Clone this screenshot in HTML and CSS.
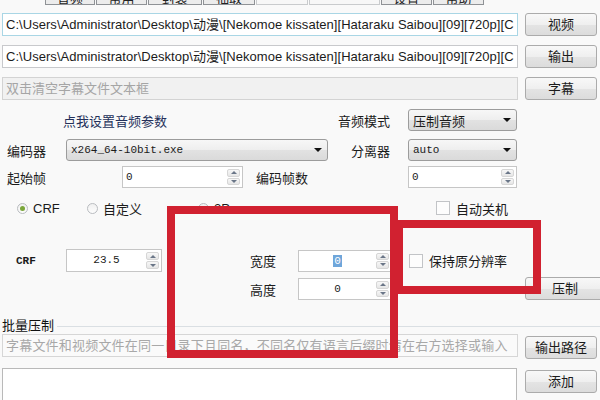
FILE: index.html
```html
<!DOCTYPE html>
<html>
<head>
<meta charset="utf-8">
<link rel="stylesheet" href="styles.css">
</head>
<body>
<div class="win">
  <div class="tabs">
    <div class="tab w50">音频</div>
    <div class="tab w51">常用</div>
    <div class="tab w54">封装</div>
    <div class="tab w52">抽取</div>
    <div class="tab w52 light"></div>
    <div class="tab w71 light"></div>
    <div class="tab w51">设置</div>
    <div class="tab w51">帮助</div>
  </div>

  <div class="row r1">
    <div class="txt focus path">C:\Users\Administrator\Desktop\动漫\[Nekomoe kissaten][Hataraku Saibou][09][720p][C</div>
    <div class="btn">视频</div>
  </div>
  <div class="row r2">
    <div class="txt path">C:\Users\Administrator\Desktop\动漫\[Nekomoe kissaten][Hataraku Saibou][09][720p][C</div>
    <div class="btn">输出</div>
  </div>
  <div class="row r3">
    <div class="txt disabled">双击清空字幕文件文本框</div>
    <div class="btn">字幕</div>
  </div>

  <div class="row r4">
    <span class="link">点我设置音频参数</span>
    <span class="lab right w127">音频模式</span>
    <div class="combo w109 m18"><span>压制音频</span><i class="arrow"></i></div>
  </div>
  <div class="row r5">
    <span class="lab first w59">编码器</span>
    <div class="combo w262 mono"><span>x264_64-10bit.exe</span><i class="arrow"></i></div>
    <span class="lab right w62">分离器</span>
    <div class="combo w109 m18 mono"><span>auto</span><i class="arrow"></i></div>
  </div>
  <div class="row r6">
    <span class="lab first w115">起始帧</span>
    <div class="spin w121"><span class="val mono">0</span><span class="arrows"><i class="up"></i><i class="dn"></i></span></div>
    <span class="lab w152 m13">编码帧数</span>
    <div class="spin w109"><span class="val mono">0</span><span class="arrows"><i class="up"></i><i class="dn"></i></span></div>
  </div>

  <div class="row r7">
    <label class="opt o1"><span class="radio on"></span>CRF</label>
    <label class="opt o2"><span class="radio"></span>自定义</label>
    <label class="opt o3"><span class="radio"></span>2Pass</label>
    <label class="opt"><span class="check"></span>自动关机</label>
  </div>

  <div class="row r8">
    <span class="lab mono crf w50">CRF</span>
    <div class="spin w96 tall"><span class="val mono center">23.5</span><span class="arrows"><i class="up"></i><i class="dn"></i></span></div>
    <span class="lab w48 m88">宽度</span>
    <div class="spin w94"><span class="val mono center"><span class="sel">0</span></span><span class="arrows"><i class="up"></i><i class="dn"></i></span></div>
    <label class="opt keep"><span class="check"></span>保持原分辨率</label>
  </div>
  <div class="row r9">
    <span class="lab w48 m248">高度</span>
    <div class="spin w94"><span class="val mono center">0</span><span class="arrows"><i class="up"></i><i class="dn"></i></span></div>
    <div class="btn wide go">压制</div>
  </div>

  <div class="group">
    <span class="glabel">批量压制</span>
    <span class="gline"></span>
  </div>
  <div class="row r10">
    <div class="txt hint">字幕文件和视频文件在同一目录下且同名，不同名仅有语言后缀时请在右方选择或输入</div>
    <div class="btn low">输出路径</div>
  </div>
  <div class="row r11">
    <div class="list"></div>
    <div class="btncol">
      <div class="btn">添加</div>
      <div class="btn">删除</div>
    </div>
  </div>
</div>

<div class="mark m-a"></div>
<div class="mark m-b"></div>
</body>
</html>
```

FILE: styles.css
```css
body {
  margin: 0;
  width: 600px;
  height: 400px;
  overflow: hidden;
  position: relative;
  background: #f9f9f9;
  font-family: "Liberation Sans", "Noto Sans CJK SC", sans-serif;
  font-size: 13px;
  color: #1b1b1b;
}

.win {
  padding-left: 2px;
  height: 400px;
  overflow: hidden;
}

/* tabs (only bottoms visible) */
.tabs {
  display: flex;
  height: 5px;
  margin-left: 43px;
}
.tab {
  box-sizing: border-box;
  height: 5px;
  overflow: hidden;
  display: flex;
  justify-content: center;
  align-items: flex-end;
  line-height: 11px;
  font-size: 13px;
  background: #ececec;
  border: 1px solid #8f9296;
  border-top: none;
  margin-right: 1px;
  color: #222;
}
.tab.light {
  background: #f7f7f7;
  border-color: #c9cbcd;
}
.w50 { width: 50px; }
.w51 { width: 51px; }
.w52 { width: 52px; }
.w54 { width: 54px; }
.w71 { width: 71px; }

.row {
  display: flex;
  align-items: center;
}

.txt {
  box-sizing: border-box;
  width: 516px;
  height: 23px;
  border: 1px solid #c8c9cc;
  background: #fff;
  padding: 0 3px;
  line-height: 21px;
  white-space: nowrap;
  overflow: hidden;
}
.txt.path {
  letter-spacing: 0.04px;
}
.txt.focus {
  border-color: #a9d6e5;
}
.txt.disabled {
  background: #f1f1f1;
  color: #a5a5a5;
  border-color: #d3d3d3;
}
.txt.hint {
  color: #a8a8a8;
  border-color: #d6d6d6;
  background: #fafafa;
  letter-spacing: 0.2px;
}

.btn {
  box-sizing: border-box;
  width: 72px;
  height: 23px;
  margin-left: 7px;
  border: 1px solid #ababab;
  border-radius: 3px;
  background: linear-gradient(#f8f8f8, #efefef 50%, #e4e4e4 51%, #dcdcdc);
  text-align: center;
  line-height: 21px;
  color: #1b1b1b;
  flex: none;
}
.btn.wide { width: 80px; }

.r1 { margin-top: 8px; }
.r2 { margin-top: 9px; }
.r3 { margin-top: 9px; }
.r4 { margin-top: 9px; height: 22px; }
.r5 { margin-top: 8px; height: 22px; }
.r6 { margin-top: 5px; height: 22px; }
.r7 { margin-top: 12px; height: 16px; }
.r8 { margin-top: 33px; height: 23px; }
.r9 { margin-top: 6px; height: 22px; }
.r10 { margin-top: 2px; align-items: flex-start; }
.r11 { margin-top: 9px; align-items: flex-start; }

.link {
  margin-left: 61px;
  width: 200px;
  color: #24305a;
}
.lab {
  flex: none;
  white-space: nowrap;
}
.lab.right { text-align: right; }
.lab.first { margin-left: 5px; }
.lab.crf { margin-left: 14px; font-weight: bold; }
.w48 { width: 48px; }
.w50 { width: 50px; }
.w59 { width: 59px; }
.w62 { width: 62px; }
.w115 { width: 115px; }
.w127 { width: 127px; }
.w152 { width: 152px; }
.m13 { margin-left: 13px; }
.m18 { margin-left: 18px; }
.m88 { margin-left: 88px; }
.m248 { margin-left: 248px; }

.mono {
  font-family: "Liberation Mono", "Noto Sans CJK SC", monospace;
  font-size: 11px;
}

.combo {
  box-sizing: border-box;
  height: 22px;
  flex: none;
  border: 1px solid #9c9c9c;
  border-radius: 3px;
  background: linear-gradient(#f7f7f7, #eeeeee 50%, #e2e2e2 51%, #dadada);
  display: flex;
  align-items: center;
  justify-content: space-between;
  padding: 0 5px 0 4px;
}
.w109 { width: 109px; }
.w262 { width: 262px; }
.w121 { width: 121px; }
.w96 { width: 96px; }
.w94 { width: 94px; }

.arrow {
  width: 0;
  height: 0;
  border-left: 4px solid transparent;
  border-right: 4px solid transparent;
  border-top: 4px solid #111;
}

.spin {
  box-sizing: border-box;
  height: 22px;
  flex: none;
  border: 1px solid #c6c6c6;
  background: #fff;
  display: flex;
}
.spin.tall { height: 23px; }
.spin .val {
  flex: 1;
  padding-left: 3px;
  line-height: 20px;
}
.spin .val.center {
  text-align: center;
  padding-left: 0;
}
.sel {
  background: #6fa6da;
  color: #fff;
  padding: 0 1px;
}
.arrows {
  width: 13px;
  margin: 2px 2px 2px 0;
  display: flex;
  flex-direction: column;
  gap: 1px;
}
.arrows i {
  flex: 1;
  box-sizing: border-box;
  border: 1px solid #d6d6d6;
  border-radius: 2px;
  background: linear-gradient(#f7f7f7, #e6e6e6);
  display: flex;
  align-items: center;
  justify-content: center;
}
.arrows i::after {
  content: "";
  width: 0;
  height: 0;
  border-left: 3px solid transparent;
  border-right: 3px solid transparent;
}
.arrows .up::after { border-bottom: 3px solid #6a7688; }
.arrows .dn::after { border-top: 3px solid #6a7688; }

.opt {
  display: flex;
  align-items: center;
  flex: none;
}
.o1 { margin-left: 15px; width: 70px; }
.o2 { width: 111px; }
.o3 { width: 238px; }
.radio {
  box-sizing: border-box;
  width: 11px;
  height: 11px;
  border-radius: 50%;
  border: 1px solid #b9bcc0;
  background: linear-gradient(#f0f0f0, #fdfdfd);
  margin-right: 5px;
  display: flex;
  align-items: center;
  justify-content: center;
}
.radio.on::after {
  content: "";
  width: 5px;
  height: 5px;
  border-radius: 50%;
  background: #7aa63a;
}
.check {
  box-sizing: border-box;
  width: 14px;
  height: 14px;
  border: 1px solid #c2c4c7;
  background: #fdfdfd;
  margin-right: 6px;
}
.keep { margin-left: 17px; }

.go {
  margin-left: 133px;
  align-self: flex-start;
  margin-top: -1px;
}

.group {
  display: flex;
  align-items: center;
  margin-top: 17px;
  height: 15px;
}
.glabel {
  color: #111;
}
.gline {
  flex: 1;
  height: 1px;
  background: #dadfe3;
  margin: 3px 0 0 3px;
}

.low { margin-top: 2px; }

.list {
  box-sizing: border-box;
  width: 515px;
  height: 40px;
  border: 1px solid #b9b9b9;
  border-bottom: none;
  background: #fff;
}
.btncol {
  display: flex;
  flex-direction: column;
  gap: 7px;
  margin-top: 2px;
  margin-left: 1px;
  height: 32px;
}

/* red annotation boxes drawn over the screenshot */
.mark {
  position: absolute;
  box-sizing: border-box;
  border: 8px solid #d12130;
}
.m-a {
  left: 167px;
  top: 206px;
  width: 231px;
  height: 152px;
}
.m-b {
  left: 395px;
  top: 220px;
  width: 146px;
  height: 74px;
}
```
